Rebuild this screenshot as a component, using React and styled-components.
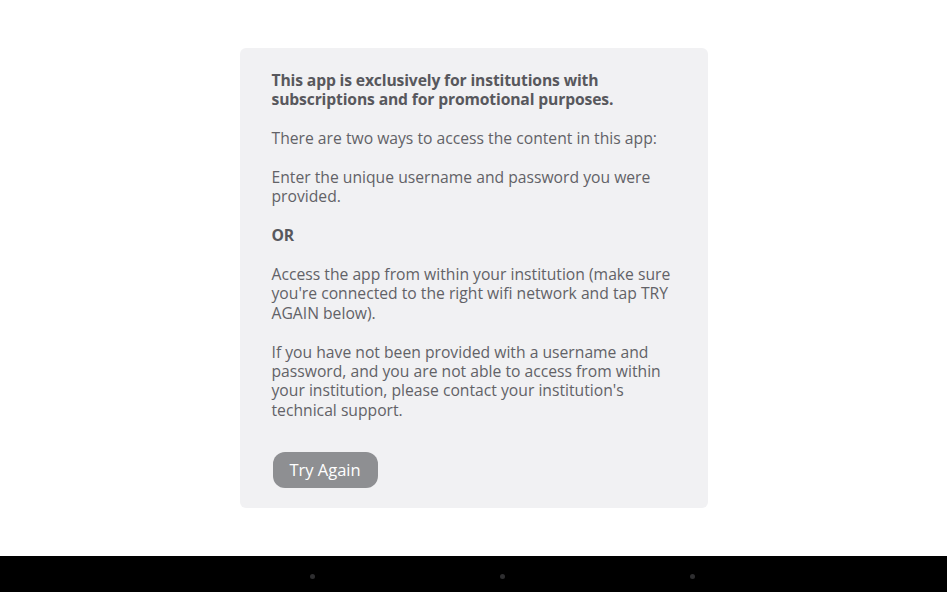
import React from "react";
import styled, { createGlobalStyle } from "styled-components";

const Global = createGlobalStyle`
  html, body { margin: 0; padding: 0; background: #ffffff; }
  body { font-family: "Open Sans", "Liberation Sans", sans-serif; }
  * { box-sizing: border-box; }
`;

const Screen = styled.div`
  width: 947px;
  height: 592px;
  display: flex;
  flex-direction: column;
  background: #ffffff;
  overflow: hidden;
`;

const Main = styled.main`
  flex: 1;
  display: flex;
  justify-content: center;
  align-items: flex-start;
  padding-top: 48px;
`;

const Card = styled.section`
  width: 468px;
  height: 460px;
  background: #f1f1f3;
  border-radius: 6px;
  padding: 23px 30px 20px 32px;
  display: flex;
  flex-direction: column;
  color: #5f5f64;
  font-size: 15.7px;
  line-height: 19.4px;
`;

const Paragraph = styled.p`
  margin: 0 0 19.4px 0;
  font-weight: ${(p) => (p.$bold ? 700 : 400)};
  letter-spacing: ${(p) => (p.$bold ? "-0.15px" : "0")};
  color: ${(p) => (p.$bold ? "#58585d" : "#626267")};
`;

const Button = styled.button`
  margin-top: 12px;
  margin-left: 1px;
  align-self: flex-start;
  width: 105px;
  height: 36px;
  padding: 0;
  border: none;
  border-radius: 12px;
  background: #8e8f92;
  color: #ffffff;
  font-family: "Open Sans", "Liberation Sans", sans-serif;
  font-size: 16.5px;
  cursor: pointer;
`;

const NavBar = styled.nav`
  height: 36px;
  background: #000000;
  display: flex;
  align-items: center;
  justify-content: center;
  gap: 185px;
  padding: 4px 0 0 58px;
`;

const NavDot = styled.span`
  width: 5px;
  height: 5px;
  border-radius: 50%;
  background: #2e2e30;
`;

export default function App() {
  return (
    <Screen>
      <Global />
      <Main>
        <Card>
          <Paragraph $bold>
            This app is exclusively for institutions with subscriptions and for promotional purposes.
          </Paragraph>
          <Paragraph>There are two ways to access the content in this app:</Paragraph>
          <Paragraph>Enter the unique username and password you were provided.</Paragraph>
          <Paragraph $bold>OR</Paragraph>
          <Paragraph>
            Access the app from within your institution (make sure you're connected to the right wifi network and tap TRY AGAIN below).
          </Paragraph>
          <Paragraph>
            If you have not been provided with a username and password, and you are not able to access from within your institution, please contact your institution's technical support.
          </Paragraph>
          <Button>Try Again</Button>
        </Card>
      </Main>
      <NavBar>
        <NavDot />
        <NavDot />
        <NavDot />
      </NavBar>
    </Screen>
  );
}
